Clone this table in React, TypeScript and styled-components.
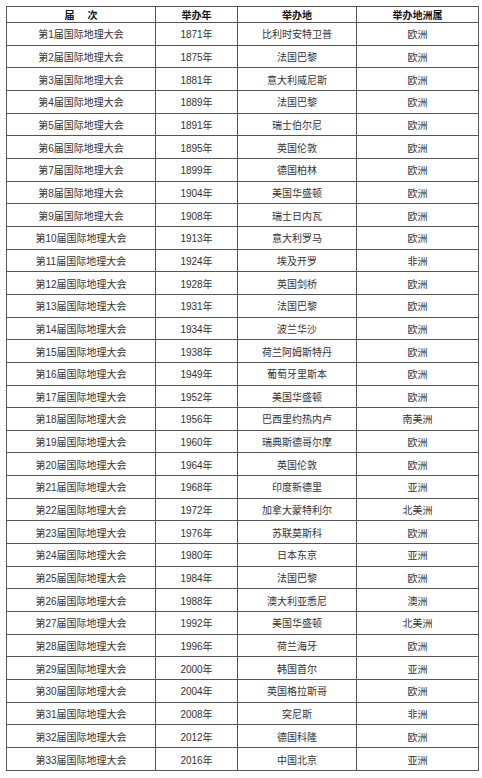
import React from 'react';
import styled, { createGlobalStyle } from 'styled-components';

const GlobalStyle = createGlobalStyle`
    html, body {
        margin: 0;
        padding: 0;
        background: #ffffff;
    }
    body {
        font-family: "Liberation Sans", "Noto Sans CJK SC", sans-serif;
    }
`;

const Page = styled.div`
    padding: 6px 0 0 6px;
`;

const Table = styled.table`
    width: 472px;
    height: 765px;
    table-layout: fixed;
    border-collapse: collapse;
    border: 1px solid #2e2e2e;
    font-family: "Liberation Sans", "Noto Sans CJK SC", sans-serif;
    font-size: 10px;
    color: #333333;
`;

const HeadCell = styled.th`
    border: 1px solid #555555;
    font-weight: bold;
    color: #111111;
    text-align: center;
    vertical-align: middle;
    padding: 0;
    white-space: pre;
`;

const Cell = styled.td`
    border: 1px solid #555555;
    text-align: center;
    vertical-align: middle;
    padding: 0;
    white-space: nowrap;
`;

type Row = [number, number, string, string];

const rows: Row[] = [
    [1, 1871, '比利时安特卫普', '欧洲'],
    [2, 1875, '法国巴黎', '欧洲'],
    [3, 1881, '意大利威尼斯', '欧洲'],
    [4, 1889, '法国巴黎', '欧洲'],
    [5, 1891, '瑞士伯尔尼', '欧洲'],
    [6, 1895, '英国伦敦', '欧洲'],
    [7, 1899, '德国柏林', '欧洲'],
    [8, 1904, '美国华盛顿', '欧洲'],
    [9, 1908, '瑞士日内瓦', '欧洲'],
    [10, 1913, '意大利罗马', '欧洲'],
    [11, 1924, '埃及开罗', '非洲'],
    [12, 1928, '英国剑桥', '欧洲'],
    [13, 1931, '法国巴黎', '欧洲'],
    [14, 1934, '波兰华沙', '欧洲'],
    [15, 1938, '荷兰阿姆斯特丹', '欧洲'],
    [16, 1949, '葡萄牙里斯本', '欧洲'],
    [17, 1952, '美国华盛顿', '欧洲'],
    [18, 1956, '巴西里约热内卢', '南美洲'],
    [19, 1960, '瑞典斯德哥尔摩', '欧洲'],
    [20, 1964, '英国伦敦', '欧洲'],
    [21, 1968, '印度新德里', '亚洲'],
    [22, 1972, '加拿大蒙特利尔', '北美洲'],
    [23, 1976, '苏联莫斯科', '欧洲'],
    [24, 1980, '日本东京', '亚洲'],
    [25, 1984, '法国巴黎', '欧洲'],
    [26, 1988, '澳大利亚悉尼', '澳洲'],
    [27, 1992, '美国华盛顿', '北美洲'],
    [28, 1996, '荷兰海牙', '欧洲'],
    [29, 2000, '韩国首尔', '亚洲'],
    [30, 2004, '英国格拉斯哥', '欧洲'],
    [31, 2008, '突尼斯', '非洲'],
    [32, 2012, '德国科隆', '欧洲'],
    [33, 2016, '中国北京', '亚洲'],
];

const App: React.FC = () => {
    return (
        <Page>
            <GlobalStyle />
            <Table>
                <colgroup>
                    <col style={{ width: 149 }} />
                    <col style={{ width: 82 }} />
                    <col style={{ width: 119 }} />
                    <col style={{ width: 122 }} />
                </colgroup>
                <thead>
                    <tr>
                        <HeadCell>{'届\u3000 次'}</HeadCell>
                        <HeadCell>举办年</HeadCell>
                        <HeadCell>举办地</HeadCell>
                        <HeadCell>举办地洲属</HeadCell>
                    </tr>
                </thead>
                <tbody>
                    {rows.map(([n, year, place, continent]) => (
                        <tr key={n}>
                            <Cell>{`第${n}届国际地理大会`}</Cell>
                            <Cell>{`${year}年`}</Cell>
                            <Cell>{place}</Cell>
                            <Cell>{continent}</Cell>
                        </tr>
                    ))}
                </tbody>
            </Table>
        </Page>
    );
};

export default App;
